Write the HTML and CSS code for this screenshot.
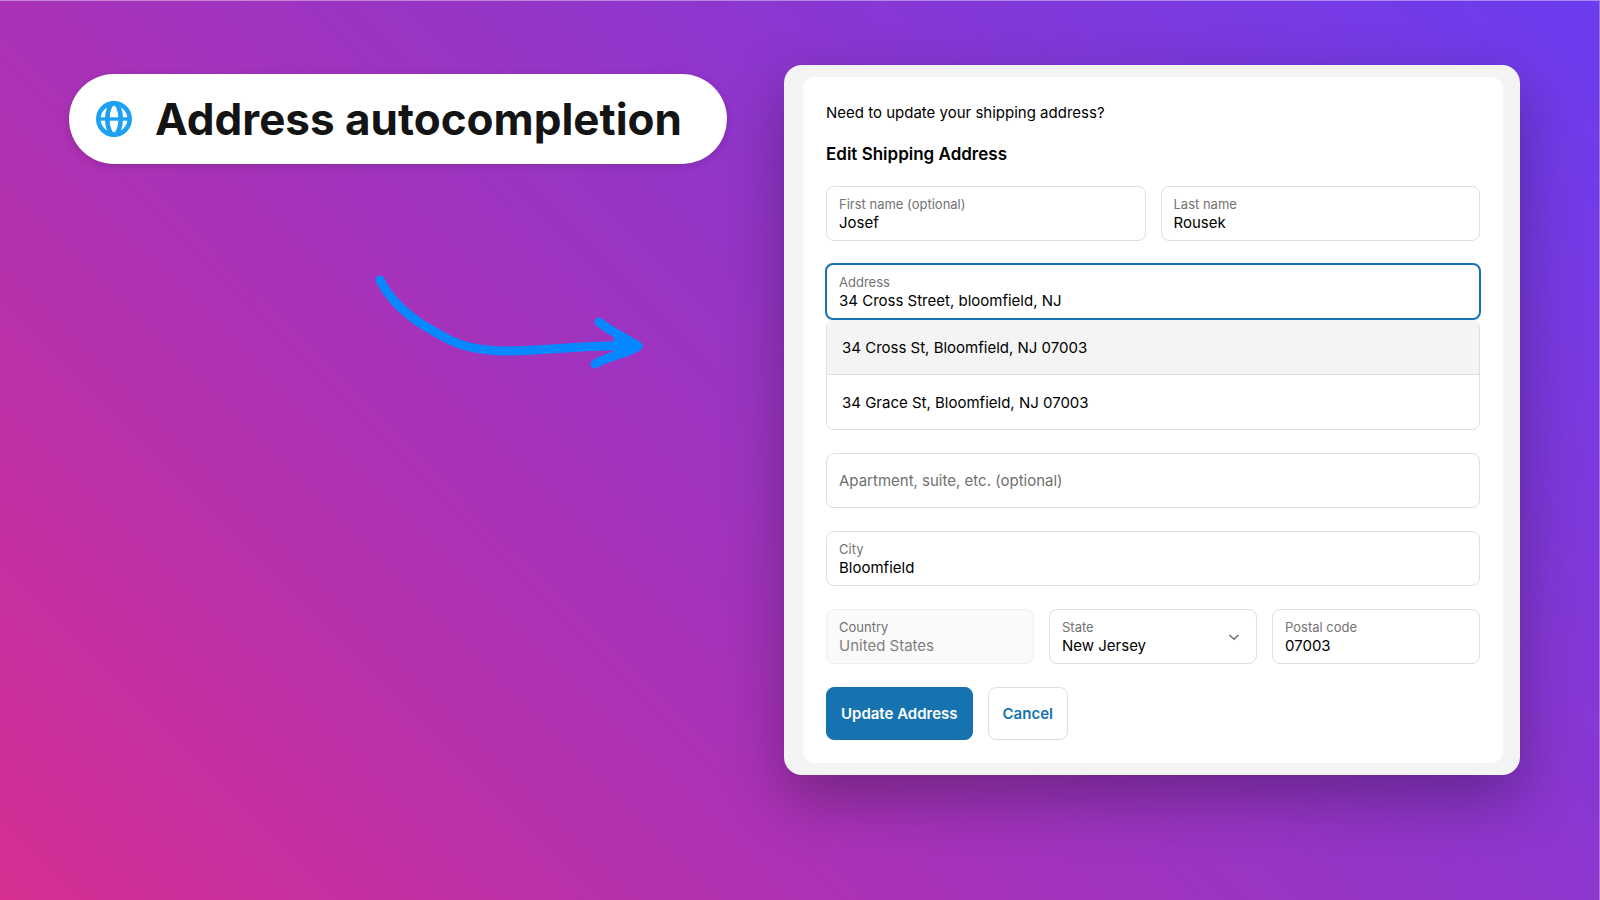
FILE: index.html
```
<!DOCTYPE html>
<html lang="en">
<head>
    <meta charset="UTF-8">
    <meta name="viewport" content="width=device-width, initial-scale=1.0">
    <title>Address autocompletion</title>
    <link rel="stylesheet" href="styles.css">
</head>
<body>
    <main class="page">
        <section class="intro">
            <h1 class="pill">
                <svg class="globe" viewBox="0 0 36 36" aria-hidden="true">
                    <circle cx="18" cy="18" r="15.7"/>
                    <ellipse cx="18" cy="18" rx="6.7" ry="15.7"/>
                    <path d="M2 18h32" stroke-width="3.4"/>
                </svg>
                Address autocompletion
            </h1>
            <svg class="arrow" viewBox="0 0 276 102" aria-hidden="true">
                <path d="M10 9C19 27 32 40 50 52C66 62 80 70 92 74C112 80 140 81 163 79C190 78 215 75 240 75H268"/>
                <path d="M229 51C240 60 255 67 268 75C257 83 240 84 225 93"/>
                <path d="M248 70L262 75L248 79Z"/>
            </svg>
        </section>

        <section class="card">
            <form class="form">
                <p class="question">Need to update your shipping address?</p>
                <h2>Edit Shipping Address</h2>
                <div class="row">
                    <div class="field">
                        <label for="first-name">First name (optional)</label>
                        <input type="text" id="first-name" value="Josef">
                    </div>
                    <div class="field">
                        <label for="last-name">Last name</label>
                        <input type="text" id="last-name" value="Rousek">
                    </div>
                </div>
                <div class="autocomplete">
                    <div class="field active">
                        <label for="address">Address</label>
                        <input type="text" id="address" value="34 Cross Street, bloomfield, NJ" autocomplete="off">
                    </div>
                    <ul class="suggestions">
                        <li><button type="button" class="selected">34 Cross St, Bloomfield, NJ 07003</button></li>
                        <li><button type="button">34 Grace St, Bloomfield, NJ 07003</button></li>
                    </ul>
                </div>
                <div class="field">
                    <input type="text" id="apartment" placeholder="Apartment, suite, etc. (optional)" aria-label="Apartment, suite, etc. (optional)">
                </div>
                <div class="field">
                    <label for="city">City</label>
                    <input type="text" id="city" value="Bloomfield">
                </div>
                <div class="row">
                    <div class="field disabled">
                        <label for="country">Country</label>
                        <input type="text" id="country" value="United States" disabled>
                    </div>
                    <div class="field">
                        <label for="state">State</label>
                        <select id="state">
                            <option>New Jersey</option>
                            <option>New York</option>
                        </select>
                        <svg class="chevron" viewBox="0 0 12 8" aria-hidden="true"><path d="M1.5 2L6 6.2L10.500 2"/></svg>
                    </div>
                    <div class="field">
                        <label for="postal-code">Postal code</label>
                        <input type="text" id="postal-code" value="07003">
                    </div>
                </div>
                <div class="actions">
                    <button type="submit" class="btn primary">Update Address</button>
                    <button type="button" class="btn">Cancel</button>
                </div>
            </form>
        </section>
    </main>
</body>
</html>
```

FILE: styles.css
```
* {
    box-sizing: border-box;
}

body {
    margin: 0;
    min-height: 100vh;
    font-family: Inter, "Liberation Sans", sans-serif;
    font-size: 15px;
    line-height: 20px;
    color: #000;
    background: linear-gradient(45deg, #d62e92 0%, #a932b7 36%, #8d36ce 64%, #6b3cef 100%);
    border-top: 1px solid rgba(255, 255, 255, 0.4);
    border-right: 1px solid rgba(255, 255, 255, 0.3);
    background-origin: border-box;
}

.page {
    display: flex;
    align-items: flex-start;
    padding: 64px 79px 64px 69px;
}

.intro {
    flex: 1;
    display: flex;
    flex-direction: column;
    align-items: flex-start;
    padding-top: 9px;
}

.pill {
    display: flex;
    align-items: center;
    gap: 23px;
    margin: 0;
    padding: 15px 45px 15px 27px;
    border-radius: 45px;
    background: #fff;
    color: #141414;
    font-size: 44px;
    line-height: 60px;
    font-weight: 700;
    white-space: nowrap;
    box-shadow: 0 2px 8px rgba(0, 0, 0, 0.15);
}

.globe {
    width: 36px;
    height: 36px;
    fill: none;
    stroke: #1da1f2;
    stroke-width: 4.6;
}

.arrow {
    width: 276px;
    height: 102px;
    margin: 107px 138px 0 0;
    align-self: flex-end;
    fill: none;
    stroke: #0788ff;
    stroke-width: 9;
    stroke-linecap: round;
    stroke-linejoin: round;
}

.card {
    width: 46vw;
    padding: 12px 17px 12px 19px;
    border-radius: 18px;
    background: #f4f4f4;
    box-shadow: 0 24px 60px rgba(0, 0, 0, 0.3);
}

.form {
    display: flex;
    flex-direction: column;
    gap: 23px;
    padding: 23px;
    border-radius: 12px;
    background: #fff;
}

.question {
    margin: 3px 0 0;
}

h2 {
    margin: -2px 0;
    font-size: 17px;
    line-height: 21px;
    font-weight: 600;
}

.row {
    display: flex;
    gap: 15px;
}

.row .field {
    flex: 1;
    min-width: 0;
}

.field {
    position: relative;
    display: flex;
    flex-direction: column;
    justify-content: center;
    height: 55px;
    padding: 0 12px;
    border: 1px solid #dfdfdf;
    border-radius: 8px;
    background: #fff;
}

.field label {
    font-size: 13px;
    line-height: 18px;
    color: #737373;
}

.field input,
.field select {
    width: 100%;
    height: 20px;
    margin: 0;
    padding: 0;
    border: none;
    outline: none;
    background: transparent;
    appearance: none;
    font: inherit;
    color: #000;
}

.field input::placeholder {
    color: #707070;
    opacity: 1;
}

.field.disabled {
    background: #fafafa;
    border-color: #efefef;
}

.field.disabled input {
    color: #808080;
}

.field.active {
    height: 57px;
    margin: -1px -1px 0;
    border: 2px solid #1773b0;
}

.chevron {
    position: absolute;
    right: 16px;
    top: 23px;
    width: 12px;
    height: 8px;
    fill: none;
    stroke: #707070;
    stroke-width: 1.5;
    pointer-events: none;
}

.suggestions {
    margin: 0;
    padding: 0;
    list-style: none;
    border: 1px solid #dfdfdf;
    border-top: none;
    border-radius: 8px;
    overflow: hidden;
}

.suggestions button {
    display: block;
    width: 100%;
    height: 54px;
    padding: 2px 15px 0;
    border: none;
    background: #fff;
    color: #000;
    font: inherit;
    text-align: left;
    cursor: pointer;
}

.suggestions .selected {
    height: 55px;
    background: #f4f4f4;
    border-bottom: 1px solid #dfdfdf;
}

.actions {
    display: flex;
    gap: 15px;
}

.btn {
    height: 53px;
    padding: 0 14px;
    border: 1px solid #dfdfdf;
    border-radius: 8px;
    background: #fff;
    color: #1773b0;
    font: inherit;
    font-weight: 600;
    cursor: pointer;
}

.btn.primary {
    background: #1773b0;
    border-color: #1773b0;
    color: #fff;
}
```
